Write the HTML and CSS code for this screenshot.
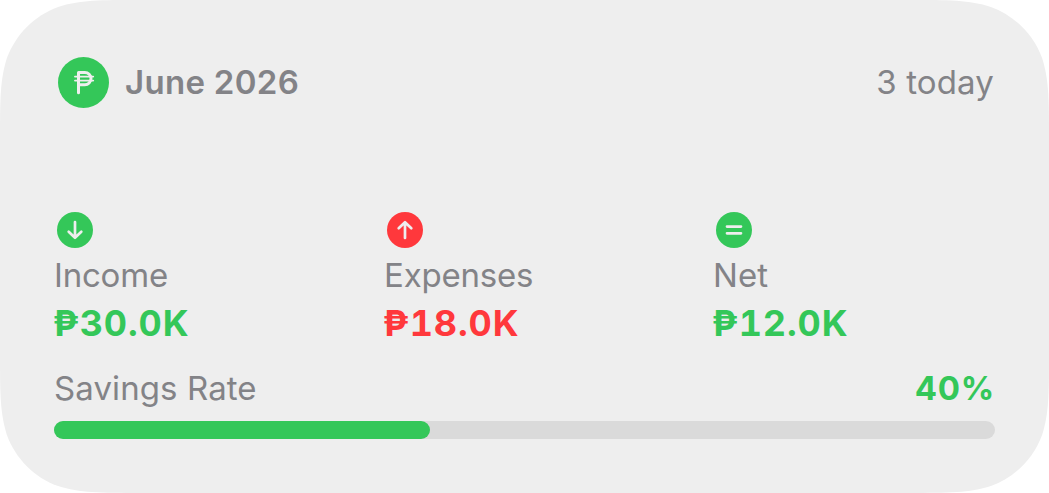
FILE: index.html
```html
<!DOCTYPE html>
<html lang="en">
<head>
<meta charset="utf-8">
<title>Budget</title>
<link rel="stylesheet" href="styles.css">
</head>
<body>
<main class="card">
  <header class="row header">
    <svg class="logo" viewBox="0 0 51 51"><circle cx="25.500" cy="25.500" r="25.500" fill="#34c759"/><path d="M20.500 35.800V15.400H26.800A6.200 6.200 0 0 1 26.800 27.800H20.500" fill="none" stroke="#efefef" stroke-width="3" stroke-linecap="round" stroke-linejoin="round"/><path d="M17 19.600H35.200M17 23.600H35.200" fill="none" stroke="#efefef" stroke-width="1.900" stroke-linecap="round"/></svg>
    <span class="month">June 2026</span>
    <span class="today">3 today</span>
  </header>
  <section class="stats">
    <div class="stat income">
      <svg class="icon" viewBox="0 0 36 36"><circle cx="18" cy="18" r="18"/><path d="M18 10V25.500M11.700 19.700L18 25.800L24.300 19.700"/></svg>
      <span class="label">Income</span>
      <span class="value">₱30.0K</span>
    </div>
    <div class="stat expenses">
      <svg class="icon" viewBox="0 0 36 36"><circle cx="18" cy="18" r="18"/><path d="M18 26V10.500M11.700 16.300L18 10.200L24.300 16.300"/></svg>
      <span class="label">Expenses</span>
      <span class="value">₱18.0K</span>
    </div>
    <div class="stat net">
      <svg class="icon" viewBox="0 0 36 36"><circle cx="18" cy="18" r="18"/><path d="M11 14.600H25M11 21.300H25"/></svg>
      <span class="label">Net</span>
      <span class="value">₱12.0K</span>
    </div>
  </section>
  <div class="row savings"><span class="label">Savings Rate</span><span class="rate">40%</span></div>
  <div class="track"><div class="fill"></div></div>
</main>
</body>
</html>
```
FILE: styles.css
```css
* { box-sizing: border-box; }
body { margin: 0; background: #fff; font-family: Inter, sans-serif; color: #838387; }
.card {
  width: 1049px; height: 493px; padding: 57px 54px 0; background: #eee;
  clip-path: path("M0 140.600C0 100.100 0 79.900 6.900 58.100C15.600 34.300 34.300 15.600 58.100 6.900C79.900 0 100.100 0 140.600 0H908.400C948.900 0 969.100 0 990.900 6.900C1014.700 15.600 1033.400 34.300 1042.100 58.100C1049 79.900 1049 100.100 1049 140.600V352.400C1049 392.900 1049 413.100 1042.100 434.900C1033.400 458.700 1014.700 477.400 990.900 486.100C969.100 493 948.900 493 908.400 493H140.600C100.100 493 79.900 493 58.100 486.100C34.300 477.400 15.600 458.700 6.900 434.900C0 413.100 0 392.900 0 352.400Z");
}
.row { display: flex; align-items: center; }
.header { height: 51px; padding: 0 1px 0 4px; }
.logo { width: 51px; height: 51px; margin-right: 16px; }
.month, .today { height: 42px; line-height: 40px; font-size: 33px; }
.month { font-weight: 600; letter-spacing: 0.3px; }
.today { margin-left: auto; letter-spacing: 0.15px; }
.stats { display: grid; grid-template-columns: 330px 329px 1fr; margin-top: 104px; }
.stat { display: flex; flex-direction: column; }
.icon { width: 36px; height: 36px; margin-left: 3px; }
.icon circle { fill: #34c759; }
.icon path { fill: none; stroke: #eee; stroke-width: 2.7; stroke-linecap: round; stroke-linejoin: round; }
.label { font-size: 33px; line-height: 40px; letter-spacing: 0.1px; }
.stat .label { margin-top: 7px; letter-spacing: -0.2px; }
.stat.net .label { letter-spacing: 0.1px; }
.value { font-size: 36px; line-height: 44px; margin-top: 6px; margin-left: -1px; font-weight: 700; color: #34c759; letter-spacing: 0.9px; font-variant-numeric: tabular-nums; }
.expenses .icon circle { fill: #ff383c; }
.expenses .value { color: #ff383c; }
.savings { justify-content: space-between; height: 40px; margin-top: 23px; padding-right: 1px; }
.rate { font-size: 33px; line-height: 40px; font-weight: 700; color: #34c759; letter-spacing: 0.7px; margin-right: -1px; }
.track { height: 18px; margin-top: 13px; border-radius: 9px; background: #dadada; }
.fill { width: 40%; height: 100%; border-radius: 9px; background: #34c759; }
```
